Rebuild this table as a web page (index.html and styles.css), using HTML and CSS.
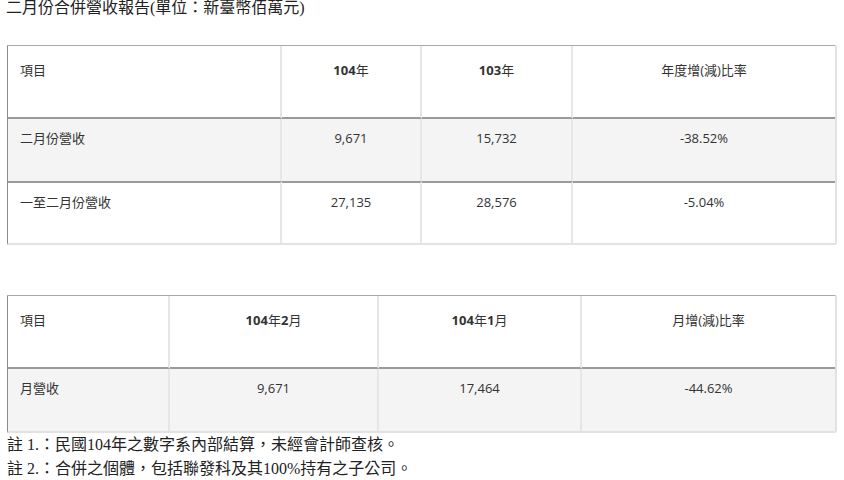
FILE: index.html
```html
<!DOCTYPE html>
<html lang="zh-Hant">
<head>
<meta charset="utf-8">
<title>二月份合併營收報告</title>
<link rel="stylesheet" href="styles.css">
</head>
<body>
<h1 class="title">二月份合併營收報告(單位：新臺幣佰萬元)</h1>

<table class="rev rev-year">
  <colgroup>
    <col class="c1"><col class="c2"><col class="c3"><col class="c4">
  </colgroup>
  <thead>
    <tr>
      <th class="left">項目</th>
      <th><b>104</b>年</th>
      <th><b>103</b>年</th>
      <th>年度增(減)比率</th>
    </tr>
  </thead>
  <tbody>
    <tr class="shade">
      <td class="left">二月份營收</td>
      <td>9,671</td>
      <td>15,732</td>
      <td>-38.52%</td>
    </tr>
    <tr>
      <td class="left">一至二月份營收</td>
      <td>27,135</td>
      <td>28,576</td>
      <td>-5.04%</td>
    </tr>
  </tbody>
</table>

<table class="rev rev-month">
  <colgroup>
    <col class="d1"><col class="d2"><col class="d3"><col class="d4">
  </colgroup>
  <thead>
    <tr>
      <th class="left">項目</th>
      <th><b>104</b>年<b>2</b>月</th>
      <th><b>104</b>年<b>1</b>月</th>
      <th>月增(減)比率</th>
    </tr>
  </thead>
  <tbody>
    <tr class="shade">
      <td class="left">月營收</td>
      <td>9,671</td>
      <td>17,464</td>
      <td>-44.62%</td>
    </tr>
  </tbody>
</table>

<p class="note">註 1.：民國104年之數字系內部結算，未經會計師查核。</p>
<p class="note">註 2.：合併之個體，包括聯發科及其100%持有之子公司。</p>
</body>
</html>
```
FILE: styles.css
```css
html, body {
  margin: 0;
  padding: 0;
  background: #fff;
}

body {
  padding: 0 7px 0 7px;
  font-family: "Liberation Serif", "Noto Sans CJK TC", serif;
  color: #222;
}

.title {
  margin: 0 0 29px -1px;
  font-size: 16px;
  font-weight: normal;
  line-height: 16px;
  color: #222;
}

.rev {
  width: 830px;
  border-collapse: separate;
  border-spacing: 0;
  table-layout: fixed;
  font-family: "Open Sans", "Noto Sans CJK TC", sans-serif;
  font-size: 13px;
  color: #333;
  border-top: 1px solid #a8a8a8;
  border-left: 1px solid #8c8c8c;
  border-right: 2px solid #e2e2e2;
  border-bottom: 2px solid #e2e2e2;
  border-radius: 0 2px 3px 0;
}

.rev-year { margin-bottom: 50px; }
.rev-month { margin-bottom: 0; }

.c1 { width: 274px; }
.c2 { width: 140px; }
.c3 { width: 151px; }
.c4 { width: auto; }

.d1 { width: 162px; }
.d2 { width: 209px; }
.d3 { width: 203px; }
.d4 { width: auto; }

.rev th,
.rev td {
  text-align: center;
  vertical-align: top;
  padding: 0 12px;
  line-height: 18px;
  border-right: 2px solid #e6e6e6;
}

.rev th:last-child,
.rev td:last-child {
  border-right: none;
}

.rev th {
  height: 73px;
  padding-top: 15px;
  box-sizing: border-box;
  font-weight: normal;
  border-bottom: 2px solid #9a9a9a;
}

.rev th b {
  font-weight: 700;
}

.rev td {
  height: 62px;
  padding-top: 10px;
  box-sizing: border-box;
}

.rev tbody tr + tr td {
  border-top: 2px solid #9a9a9a;
  padding-top: 10px;
}

.rev .left {
  text-align: left;
}

.shade td {
  background: #f4f4f4;
}

.note {
  margin: 0;
  font-size: 16px;
  line-height: 24px;
  color: #222;
}
```
